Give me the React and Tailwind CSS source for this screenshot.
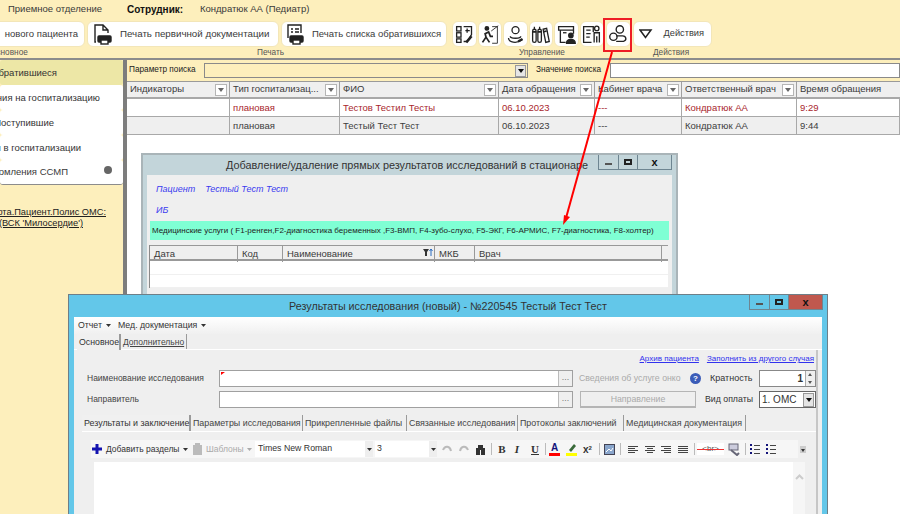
import React from 'react';

const ico = { fill: 'none', stroke: '#222', strokeWidth: 1.5 };

// Кнопки панели управления - иконки
const ToolIcons = [
  <g {...ico} key="a"><rect x="3" y="3" width="5" height="5" /><rect x="3" y="10" width="5" height="5" /><rect x="3" y="17" width="5" height="4" /><path d="M11 3h9v9l-5 8h-4M15 5v5M13 7.500h5" /><path d="M14 21l6-7" strokeWidth="3" /></g>,
  <g {...ico} key="b"><circle cx="9" cy="5" r="2" fill="#222" /><path d="M4 21l4-6-1-4 4-2 2 5h3M8 15l4 6" strokeWidth="2" /><path d="M14 8l8-6M15 3h6v19h-6" strokeWidth="1" /></g>,
  <g {...ico} key="c"><circle cx="12" cy="7" r="4" /><path d="M6 14c0 3 12 3 12 0M4 16c0 5 9 7 16 2" /><path d="M15 20l5-3" strokeWidth="2.500" /></g>,
  <g {...ico} key="d"><rect x="3" y="6" width="4" height="15" rx="2" /><rect x="9" y="6" width="4" height="15" rx="2" /><path d="M15 6l4-1 3 15-4 1z" /><path d="M3 9h4M9 9h4M15 9l4-1" strokeWidth="2" /><path d="M5 3v3M11 3v3" /></g>,
  <g {...ico} key="e"><path d="M3 3h17v4H3zM5 7v14h6M20 7v4" /><path d="M8 10h4" /><circle cx="17" cy="13" r="2.500" fill="#222" /><path d="M12 22c0-6 10-6 10 0z" fill="#222" /></g>,
  <g {...ico} key="f"><path d="M12 21H3V3h11v6" /><path d="M6 7h5M6 11h5M6 15h4" /><circle cx="18" cy="5" r="2.500" /><path d="M15 21V10h6v11M18 14v7" /></g>,
];

const Caret = ({ className = '', color = '#333' }) => (
  <svg className={`shrink-0 ${className}`} width="5" height="3"><path d="M0 0h5L2.500 3z" fill={color} /></svg>
);

const Header = ({ children }) => (
  <div className="flex items-center justify-between min-w-0 h-[17px] pl-[3px] pr-[2px] border-r border-[#a0a0a0] border-b-2 border-b-[#a8a8a8] bg-[#efefef] text-[9.5px]">
    <span className="whitespace-nowrap">{children}</span>
    <span className="flex items-center justify-center shrink-0 w-[12px] h-[12px] border border-[#b5b5b5] bg-white text-[#666]">
      <svg width="6" height="4"><path d="M0 0h6L3 4z" fill="#666" /></svg>
    </span>
  </div>
);

const Cell = ({ children, red }) => (
  <div className={`flex items-center h-[17px] pl-[3px] pt-px border-r border-[#a8a8a8] text-[9.5px] whitespace-nowrap overflow-hidden ${red ? 'text-[#a8262c]' : 'text-[#3d3d3d]'}`}>
    {children}
  </div>
);

const WinButtons = ({ closeRed }) => (
  <div className="absolute top-0 right-[4px] flex h-[15px] border border-[#6e8591] border-t-0">
    <div className="flex items-end justify-center w-[20px] pb-[4px] border-r border-[#6e8591]"><div className="w-[7px] h-[2px] bg-[#555]" /></div>
    <div className="flex items-center justify-center w-[19px] border-r border-[#6e8591]"><div className="w-[8px] h-[6px] border-2 border-[#222]" /></div>
    <div className={`flex items-center justify-center w-[33px] text-[11px] font-bold leading-none ${closeRed ? 'bg-[#c0584e] text-[#111]' : 'text-[#111]'}`}>x</div>
  </div>
);

const ToolBtn = ({ children, className = '' }) => (
  <div className={`flex items-center h-[26px] bg-white rounded-[6px] border border-[#f3e6b8] shrink-0 ${className}`}>{children}</div>
);

const PrintIcon = ({ list }) => (
  <svg className="shrink-0" width="20" height="22" viewBox="0 0 20 22" fill="none" stroke="#222" strokeWidth="1.4">
    {list
      ? <path d="M3 15V2h13v8M6 6h2M10 6h4M6 9h2M10 9h4" />
      : <path d="M3 19H2V2h8l5 5v3M10 2v5h5" />}
    <rect x="5" y="13" width="13" height="6" rx="1" fill="#222" />
    <rect x="8" y="17" width="7" height="4" fill="#fff" />
  </svg>
);

const Tab = ({ children, active, className = '' }) => (
  <div className={`flex items-center pl-[2px] border-r border-[#9a9a9a] whitespace-nowrap ${active ? 'bg-[#f0f0f0] text-[#333]' : 'text-[#444]'} ${className}`}>{children}</div>
);

const Sep = ({ className = 'mx-[5px]' }) => <div className={`w-px h-[12px] bg-[#bbb] shrink-0 ${className}`} />;

const Align = ({ kind, className = '' }) => {
  const rows = { l: [10, 7, 10, 7], c: [10, 6, 10, 6], r: [10, 7, 10, 7], j: [10, 10, 10, 10] }[kind];
  return (
    <div className={`flex flex-col gap-px w-[10px] shrink-0 ${kind === 'l' ? 'items-start' : kind === 'c' ? 'items-center' : 'items-end'} ${className}`}>
      {rows.map((w, i) => <div key={i} className="h-px bg-[#444]" style={{ width: w }} />)}
    </div>
  );
};

const ListIcon = ({ className = '' }) => (
  <div className={`flex flex-col gap-[2px] w-[10px] shrink-0 ${className}`}>
    {[0, 1, 2].map((i) => <div key={i} className="flex gap-[2px] items-center"><div className="w-[2px] h-[2px] bg-[#14147a]" /><div className="h-px w-[6px] bg-[#444]" /></div>)}
  </div>
);

const SideItem = ({ children, active, end }) => (
  <div className={`flex items-center h-[25px] pt-[2px] rounded-[3px] overflow-hidden whitespace-nowrap text-[9.5px] ${active ? 'bg-[#ede7a6]' : 'bg-white'} text-[#333]`}>
    <span className={`flex justify-end ${end}`}>{children}</span>
  </div>
);

export default function App() {
  return (
    <div className="relative w-[900px] h-[514px] overflow-hidden bg-white font-['Liberation_Sans',sans-serif] text-[#3a3a3a]">
      {/* Верхняя панель */}
      <div className="h-[60px] bg-[#fdefbc] border-b-2 border-[#8c8c8c]">
        <div className="flex items-center h-[19px] text-[9.5px] pl-[8px]">
          <span className="w-[119px]">Приемное отделение</span>
          <span className="w-[73px] text-[10px] font-bold text-[#111]">Сотрудник:</span>
          <span>Кондратюк АА (Педиатр)</span>
        </div>
        <div className="flex items-center h-[26px] mt-[2px] ml-[-8px] text-[9.5px]">
          <ToolBtn className="w-[93px] justify-end pr-[6px]"><span className="whitespace-nowrap">нового пациента</span></ToolBtn>
          <ToolBtn className="w-[192px] ml-[2px] pl-[5px]"><PrintIcon /><span className="ml-[7px] whitespace-nowrap text-[9.75px]">Печать первичной документации</span></ToolBtn>
          <ToolBtn className="w-[166px] ml-[2px] pl-[3px]"><PrintIcon list /><span className="ml-[7px] whitespace-nowrap">Печать списка обратившихся</span></ToolBtn>
          <div className="flex gap-px ml-[5px]">
            {ToolIcons.map((icon, i) => (
              <ToolBtn key={i} className="w-[24.5px] justify-center">
                <svg width="21" height="21" viewBox="0 0 24 24">{icon}</svg>
              </ToolBtn>
            ))}
            <ToolBtn className="w-[24.5px] justify-center ml-px">
              <svg width="22" height="22" viewBox="0 0 24 24" fill="none" stroke="#222" strokeWidth="1.500">
                <circle cx="14" cy="7" r="4" /><circle cx="7" cy="15" r="4" />
                <path d="M10 14h7c4 0 5 5 1 6H10" />
              </svg>
            </ToolBtn>
            <ToolBtn className="w-[79px] pl-[5px] ml-px">
              <svg width="14" height="10" viewBox="0 0 14 10" fill="none" stroke="#222" strokeWidth="1.500"><path d="M1 1h11L6.500 8.500z" /></svg>
              <span className="ml-[11px] text-[9.25px]">Действия</span>
            </ToolBtn>
          </div>
        </div>
        <div className="relative h-[11px] text-[8.25px] text-[#555] leading-[11px]">
          <span className="absolute left-[-10px]">Основное</span>
          <span className="absolute left-[257px]">Печать</span>
          <span className="absolute left-[519px]">Управление</span>
          <span className="absolute left-[653px]">Действия</span>
        </div>
      </div>

      <div className="flex h-[454px]">
        {/* Левое меню */}
        <div className="flex flex-col w-[123px] shrink-0 bg-[#fdefbc]">
          <SideItem active end="w-[57px]">Обратившиеся</SideItem>
          <SideItem end="w-[100px]">Направления на госпитализацию</SideItem>
          <SideItem end="w-[54px]">Поступившие</SideItem>
          <SideItem end="w-[81px]">Отказы в госпитализации</SideItem>
          <div className="relative flex items-center h-[25px] pt-[1px] bg-white rounded-[3px] overflow-hidden whitespace-nowrap text-[9.5px] border-b border-[#8c8c8c]">
            <span className="flex justify-end w-[68px]">Уведомления ССМП</span>
            <div className="absolute right-[11px] top-[6px] w-[8px] h-[8px] rounded-full bg-[#666]" />
          </div>
          <div className="mt-[22px] text-[9.25px] leading-[11px] underline text-[#222] whitespace-nowrap">
            <div className="flex justify-end w-[106px]">Карта.Пациент.Полис ОМС:</div>
            <div className="flex justify-end w-[83px]">000 (ВСК 'Милосердие')</div>
          </div>
        </div>
        <div className="w-[4px] shrink-0 bg-[#7d7d7d]" />

        {/* Основная область */}
        <div className="flex-1 min-w-0">
          <div className="flex items-center h-[22px] bg-[#fdefbc] border-b border-[#9a9a9a] text-[8.25px] text-[#222]">
            <span className="w-[77px] pl-[2px]">Параметр поиска</span>
            <div className="flex justify-end items-center w-[324px] h-[15px] border border-[#8a8a8a] bg-[#fdefbc]">
              <div className="flex items-center justify-center w-[11px] h-[12px] mr-px bg-[#e6e6e6] border border-[#999]">
                <svg width="6" height="4"><path d="M0 0h6L3 4z" fill="#111" /></svg>
              </div>
            </div>
            <span className="ml-[8px] w-[74px] whitespace-nowrap">Значение поиска</span>
            <div className="flex-1 h-[15px] bg-white border border-[#8a8a8a]" />
          </div>
          <div className="grid grid-cols-[103px_110px_159px_96px_87px_115px_1fr]">
            <Header>Индикаторы</Header>
            <Header>Тип госпитализац...</Header>
            <Header>ФИО</Header>
            <Header>Дата обращения</Header>
            <Header>Кабинет врача</Header>
            <Header>Ответственный врач</Header>
            <div className="flex items-center h-[17px] pl-[3px] border-b-2 border-[#a8a8a8] bg-[#efefef] text-[9.5px]">Время обращения</div>
            <Cell />
            <Cell red>плановая</Cell>
            <Cell red>Тестов Тестил Тесты</Cell>
            <Cell red>06.10.2023</Cell>
            <Cell red>---</Cell>
            <Cell red>Кондратюк АА</Cell>
            <Cell red>9:29</Cell>
            <div className="col-span-7 grid grid-cols-[103px_110px_159px_96px_87px_115px_1fr] bg-[#efefef] border-y border-[#a8a8a8]">
              <Cell />
              <Cell>плановая</Cell>
              <Cell>Тестый Тест Тест</Cell>
              <Cell>06.10.2023</Cell>
              <Cell>---</Cell>
              <Cell>Кондратюк АА</Cell>
              <Cell>9:44</Cell>
            </div>
          </div>
        </div>
      </div>

      {/* Окно: Добавление/удаление */}
      <div className="absolute left-[141px] top-[153px] w-[537px] h-[150px] bg-[#c3d5da] border-2 border-[#a9b4b8] border-b-0 px-[4px]">
        <div className="h-[20px] pl-[79px] text-[10.875px] leading-[20px] text-[#333] whitespace-nowrap">Добавление/удаление прямых результатов исследований в стационаре</div>
        <WinButtons />
        <div className="h-[131px] bg-[#efefef] pt-[8px] pl-[3px]">
          <div className="flex gap-[10px] pl-[6px] h-[18px] italic text-[9px] text-[#3b3bf0]">
            <span>Пациент</span><span>Тестый Тест Тест</span>
          </div>
          <div className="pl-[6px] mt-[3px] h-[17px] italic text-[9px] text-[#3b3bf0]">ИБ</div>
          <div className="flex items-center h-[19px] mr-[3px] pl-[2px] bg-[#7fffd4] text-[8px] text-[#222] whitespace-nowrap">Медицинские услуги ( F1-ренген,F2-диагностика беременных ,F3-ВМП, F4-зубо-слухо, F5-ЭКГ, F6-АРМИС, F7-диагностика, F8-холтер)</div>
          <div className="mt-[5px] ml-[-1px] mr-[4px] bg-white border-l border-[#8a8a8a]">
            <div className="grid grid-cols-[88px_45px_152px_40px_187px_1fr] h-[16px] bg-[#efefef] border-y-2 border-t border-[#999] text-[9.5px] leading-[16px]">
              <div className="pl-[4px] border-r border-[#999]">Дата</div>
              <div className="pl-[4px] border-r border-[#999]">Код</div>
              <div className="relative pl-[4px] border-r border-[#999]">
                Наименование
                <span className="absolute right-[1px] top-[2px] flex">
                  <svg width="10" height="9"><path d="M0 1h6L4 4v4H2V4z" fill="#333" /><path d="M8 8V1M6.500 3L8 1l1.500 2" stroke="#2a6cc0" fill="none" /></svg>
                </span>
              </div>
              <div className="pl-[4px] border-r border-[#999]">МКБ</div>
              <div className="pl-[4px] border-r border-[#999]">Врач</div>
              <div />
            </div>
            <div className="h-[14px] border-b border-[#f0f0f0]" />
            <div className="h-[13px] border-b border-[#f0f0f0]" />
          </div>
        </div>
      </div>

      {/* Окно: Результаты исследования */}
      <div className="absolute left-[68px] top-[294px] w-[760px] h-[220px] bg-[#63c7e9] border border-[#6e7f88] border-b-0 px-[5px]">
        <div className="h-[22px] pl-[215px] text-[10.75px] leading-[22px] text-[#333] whitespace-nowrap">Результаты исследования (новый) - №220545 Тестый Тест Тест</div>
        <WinButtons closeRed />
        <div className="h-[197px] bg-[#efefef] text-[8.75px] text-[#333]">
          <div className="flex items-center h-[17px] pl-[4px] bg-gradient-to-b from-white to-[#f0f0f0]">
            <span>Отчет</span><Caret className="ml-[4px]" /><span className="ml-[7px]">Мед. документация</span><Caret className="ml-[4px]" />
          </div>
          <div className="flex h-[16px] pl-[3px] border-b border-white leading-[14px]">
            <Tab active className="w-[44px] h-[16px] border-r-2">Основное</Tab>
            <Tab className="w-[66px] h-[15px] underline text-[8.5px]">Дополнительно</Tab>
          </div>
          <div className="mr-[4px] pl-[10px] border-r-2 border-[#c6c6c6] relative">
            <div className="flex justify-end gap-[8px] h-[20px] pt-[3px] pr-[2px] text-[8px] text-[#3232ee] underline">
              <span>Архив пациента</span><span>Заполнить из другого случая</span>
            </div>
            <div className="flex items-center h-[17px]">
              <span className="w-[135px] shrink-0 pl-[3px] text-[8.5px] text-[#444] whitespace-nowrap">Наименование исследования</span>
              <div className="relative flex justify-end w-[354px] shrink-0 h-[17px] bg-white border border-[#a0a0a0]">
                <svg className="absolute left-0 top-0" width="5" height="5"><path d="M1 1h4L1 4z" fill="#f00" /></svg>
                <div className="w-[14px] text-center bg-[#efefef] border-l border-[#bbb] text-[#777] leading-[12px]">...</div>
              </div>
              <span className="ml-[6px] w-[111px] shrink-0 text-[#aaa] whitespace-nowrap">Сведения об услуге онко</span>
              <span className="w-[11px] h-[11px] shrink-0 rounded-full bg-[#3b5cb8] text-white text-[8px] leading-[11px] text-center font-bold">?</span>
              <span className="ml-[9px] w-[49px] shrink-0 text-[9px]">Кратность</span>
              <div className="flex items-center justify-end w-[57px] shrink-0 h-[17px] bg-white border border-[#888] text-[10px] font-bold">
                <span>1</span>
                <div className="ml-[2px] w-[10px] h-full flex flex-col border-l border-[#aaa] bg-[#efefef]">
                  <svg className="flex-1" width="9" height="7"><path d="M2 5h4L4 2z" fill="#555" /></svg>
                  <svg className="flex-1" width="9" height="7"><path d="M2 2h4L4 5z" fill="#555" /></svg>
                </div>
              </div>
            </div>
            <div className="flex items-center h-[17px] mt-[4px]">
              <span className="w-[135px] shrink-0 pl-[3px] text-[8.5px] text-[#444]">Направитель</span>
              <div className="flex justify-end w-[354px] shrink-0 h-[17px] bg-white border border-[#a0a0a0]">
                <div className="w-[14px] text-center bg-[#efefef] border-l border-[#bbb] text-[#777] leading-[12px]">...</div>
              </div>
              <div className="ml-[7px] w-[116px] shrink-0 h-[17px] text-center leading-[15px] text-[#aaa] border border-[#b5b5b5] border-b-2">Направление</div>
              <span className="ml-[9px] w-[54px] shrink-0 whitespace-nowrap">Вид оплаты</span>
              <div className="flex items-center justify-between w-[57px] shrink-0 h-[17px] pl-[2px] pr-px bg-white border border-[#666] text-[10px]">
                <span>1. ОМС</span>
                <div className="flex items-center justify-center w-[11px] h-[14px] bg-[#e4e4e4] border border-[#999]"><svg width="6" height="4"><path d="M0 0h6L3 4z" fill="#111" /></svg></div>
              </div>
            </div>
            <div className="flex h-[17px] mt-[7px] ml-[-2px] border-b border-white leading-[16px] text-[8.875px]">
              <Tab active className="w-[109px] border-r-2">Результаты и заключение</Tab>
              <Tab className="w-[112px]">Параметры исследования</Tab>
              <Tab className="w-[104px]">Прикрепленные файлы</Tab>
              <Tab className="w-[111px]">Связанные исследования</Tab>
              <Tab className="w-[106px]">Протоколы заключений</Tab>
              <Tab className="w-[122px]">Медицинская документация</Tab>
            </div>
            {/* Панель редактора */}
            <div className="flex items-center w-[707px] h-[18px] mt-[8px] ml-[7px] bg-[#f6f6f6] text-[8.5px]">
              <svg className="ml-[1px] shrink-0" width="10" height="10"><path d="M3.500 0h3v3.500H10v3H6.500V10h-3V6.500H0v-3h3.500z" fill="#1414b0" /></svg>
              <span className="ml-[4px] w-[77px] shrink-0 whitespace-nowrap">Добавить разделы</span>
              <Caret />
              <svg className="ml-[5px] shrink-0" width="10" height="12" fill="#bbb"><rect y="2" width="9" height="10" /><rect x="2" width="5" height="3" /></svg>
              <span className="ml-[3px] w-[41px] shrink-0 text-[#aaa] whitespace-nowrap">Шаблоны</span>
              <Caret color="#aaa" />
              <div className="flex justify-between items-center ml-[3px] w-[118px] shrink-0 h-[16px] pl-[3px] bg-white text-[#333] text-[8.75px]">Times New Roman<span className="flex items-center justify-center w-[8px] h-full bg-[#eee]"><Caret /></span></div>
              <div className="flex justify-between items-center ml-[2px] w-[62px] shrink-0 h-[16px] pl-[2px] bg-white text-[8.75px]">3<span className="flex items-center justify-center w-[8px] h-full bg-[#eee]"><Caret /></span></div>
              <svg className="ml-[4px] shrink-0" width="29" height="12" fill="none" stroke="#bbb" strokeWidth="2"><path d="M2 7c2-5 7-4 8 1M19 8c1-5 6-6 8-1" /></svg>
              <svg className="ml-[6px] shrink-0" width="9" height="11" fill="#333"><rect x="0" y="4" width="4" height="7" /><rect x="5" y="4" width="4" height="7" /><rect x="2" y="1" width="5" height="5" /></svg>
              <Sep className="ml-[6px]" />
              <span className="ml-[6px] w-[8px] shrink-0 font-['Liberation_Serif',serif] font-bold text-[11px] text-center">B</span>
              <span className="ml-[7px] w-[8px] shrink-0 font-['Liberation_Serif',serif] italic font-bold text-[11px] text-center">I</span>
              <span className="ml-[10px] w-[8px] shrink-0 font-['Liberation_Serif',serif] underline font-bold text-[11px] text-center">U</span>
              <Sep className="ml-[6px]" />
              <span className="ml-[3px] w-[11px] shrink-0 text-center font-bold text-[#14147a] text-[10px] leading-[11px] border-b-[3px] border-[#f00]">A</span>
              <svg className="ml-[6px] shrink-0" width="11" height="14"><path d="M3 8l5-6 2 2-5 6z" fill="#3a6a3a" /><rect y="11" width="11" height="3" fill="#ff0" /></svg>
              <span className="ml-[6px] w-[10px] shrink-0 font-bold text-[10px]">x<sup className="text-[6px]">2</sup></span>
              <Sep className="ml-[6px]" />
              <svg className="ml-[4px] shrink-0" width="11" height="11" fill="#8aa6cc" stroke="#445"><rect x=".5" y=".5" width="10" height="10" /><path d="M2 8l3-3 2 2 2-3" stroke="#fff" fill="none" /></svg>
              <Sep className="ml-[5px]" />
              <Align kind="l" className="ml-[7px]" /><Align kind="c" className="ml-[7px]" /><Align kind="r" className="ml-[6px]" /><Align kind="j" className="ml-[7px]" />
              <Sep className="ml-[6px]" />
              <span className="relative ml-[2px] w-[27px] h-[12px] bg-white text-[8px] text-[#555] text-center leading-[12px] shrink-0">&lt;br&gt;<span className="absolute left-0 right-0 top-[6px] h-px bg-[#e33]" /></span>
              <svg className="ml-[4px] shrink-0" width="12" height="13" fill="none" stroke="#667"><rect x="1" y="1" width="9" height="6" fill="#ccd" /><path d="M3 7l6 5 2-2" strokeWidth="2" /></svg>
              <Sep className="ml-[5px]" />
              <ListIcon className="ml-[4px]" />
              <ListIcon className="ml-[6px]" />
            </div>
            <svg className="absolute left-[726px] top-[96px]" width="6" height="7"><rect width="6" height="7" fill="#ccc" /><path d="M1 3h4L3 6z" fill="#333" /></svg>
            <div className="flex w-[711px] h-[60px] mt-[4px] ml-[10px] bg-white">
              <div className="flex-1" />
              <div className="flex justify-center w-[12px] pt-[12px] bg-[#f6f6f6]">
                <svg width="9" height="6" fill="none" stroke="#ccc" strokeWidth="2"><path d="M1 5l3.500-3.500L8 5" /></svg>
              </div>
            </div>
          </div>
        </div>
      </div>

      {/* Стрелка и выделение кнопки */}
      <div className="absolute left-[603px] top-[18px] w-[29px] h-[34px] border-2 border-[#ee1c25] pointer-events-none" />
      <svg className="absolute left-0 top-0 pointer-events-none" width="900" height="514">
        <path d="M612 52L566 218" stroke="#f00" strokeWidth="2" />
        <path d="M563 225l1-10 6 2z" fill="#f00" />
      </svg>
    </div>
  );
}
